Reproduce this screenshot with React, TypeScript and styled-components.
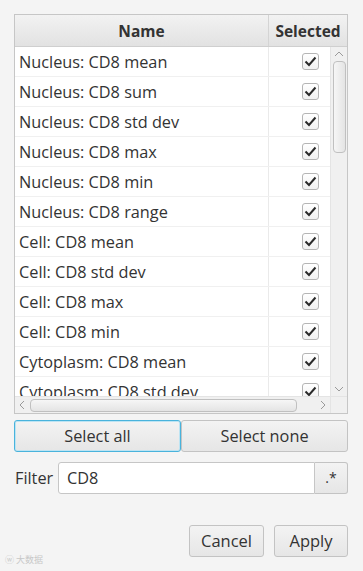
import React from "react";
import styled, { createGlobalStyle } from "styled-components";

const Global = createGlobalStyle`
  html, body { margin: 0; padding: 0; background: #f4f4f4; }
  body { font-family: "Open Sans", "Noto Sans", sans-serif; color: #333; }
`;

const Window = styled.div`
  width: 363px;
  height: 571px;
  box-sizing: border-box;
  padding: 14px 15px 0 14px;
  display: flex;
  flex-direction: column;
  position: relative;
  overflow: hidden;
`;

const Table = styled.div`
  height: 400px;
  box-sizing: border-box;
  border: 1px solid #c6c6c6;
  background: #fff;
  display: grid;
  grid-template-rows: 32px 1fr 17px;
  grid-template-columns: 1fr 17px;
`;

const Header = styled.div`
  grid-column: 1 / 3;
  display: grid;
  grid-template-columns: 254px 1fr;
  background: linear-gradient(#f2f2f2, #e2e2e2);
  border-bottom: 1px solid #cfcfcf;
  box-sizing: border-box;
`;

const HeadCell = styled.div<{ $last?: boolean }>`
  display: flex;
  align-items: center;
  justify-content: center;
  font-weight: 700;
  font-size: 15.5px;
  color: #333;
  border-right: ${(p) => (p.$last ? "none" : "1px solid #d4d4d4")};
  white-space: nowrap;
  overflow: hidden;
`;

const Body = styled.div`
  overflow: hidden;
`;

const Row = styled.div`
  display: grid;
  grid-template-columns: 254px 1fr;
  height: 30px;
  box-sizing: border-box;
  border-bottom: 1px solid #f0f0f0;
`;

const NameCell = styled.div`
  display: flex;
  align-items: center;
  padding-left: 4px;
  font-size: 16.3px;
  color: #333;
  border-right: 1px solid #eaeaea;
  white-space: nowrap;
  overflow: hidden;
`;

const CheckCell = styled.div`
  display: flex;
  align-items: center;
  justify-content: flex-end;
  padding-right: 11px;
`;

const CheckBox = styled.div`
  width: 17px;
  height: 17px;
  box-sizing: border-box;
  border: 1px solid #b5b5b5;
  border-radius: 3px;
  background: linear-gradient(#ffffff, #f1f1f1);
  display: flex;
  align-items: center;
  justify-content: center;
`;

const VScroll = styled.div`
  background: #f0f0f0;
  border-left: 1px solid #e4e4e4;
  display: flex;
  flex-direction: column;
  align-items: center;
  box-sizing: border-box;
`;

const Arrow = styled.div`
  height: 14px;
  width: 100%;
  display: flex;
  align-items: center;
  justify-content: center;
  flex: none;
`;

const VThumb = styled.div`
  width: 13px;
  height: 92px;
  box-sizing: border-box;
  border: 1px solid #c0c0c0;
  border-radius: 4px;
  background: linear-gradient(90deg, #f6f6f6, #e4e4e4);
`;

const Spacer = styled.div`
  flex: 1;
`;

const HScroll = styled.div`
  background: #f0f0f0;
  border-top: 1px solid #e4e4e4;
  display: flex;
  align-items: center;
  box-sizing: border-box;
`;

const HArrow = styled.div`
  width: 14px;
  height: 100%;
  display: flex;
  align-items: center;
  justify-content: center;
  flex: none;
`;

const HThumb = styled.div`
  width: 267px;
  height: 13px;
  margin-left: 1px;
  box-sizing: border-box;
  border: 1px solid #c0c0c0;
  border-radius: 4px;
  background: linear-gradient(#f6f6f6, #e4e4e4);
`;

const Corner = styled.div`
  background: #f0f0f0;
  border-top: 1px solid #e4e4e4;
  border-left: 1px solid #e4e4e4;
`;

const ButtonRow = styled.div`
  display: grid;
  grid-template-columns: 1fr 1fr;
  margin-top: 6px;
  height: 32px;
`;

const Btn = styled.button<{ $focus?: boolean }>`
  font-family: inherit;
  font-size: 16.3px;
  line-height: 1;
  color: #333;
  height: 32px;
  box-sizing: border-box;
  border: 1px solid ${(p) => (p.$focus ? "#49b3dc" : "#c3c3c3")};
  box-shadow: ${(p) => (p.$focus ? "inset 0 0 0 1px #bde4f3" : "none")};
  border-radius: 3px;
  background: linear-gradient(#f3f3f3, #e6e6e6);
  padding: 0 8px;
  white-space: nowrap;
  cursor: default;
`;

const FilterRow = styled.div`
  display: flex;
  align-items: center;
  margin-top: 10px;
  height: 32px;
`;

const Label = styled.span`
  font-size: 16.3px;
  color: #333;
  width: 44px;
  padding-left: 1px;
  box-sizing: border-box;
`;

const Input = styled.div`
  flex: 1;
  height: 32px;
  box-sizing: border-box;
  border: 1px solid #c6c6c6;
  border-radius: 3px 0 0 3px;
  background: #fff;
  display: flex;
  align-items: center;
  padding-left: 8px;
  font-size: 16.3px;
  color: #333;
`;

const RegexBtn = styled(Btn)`
  width: 33px;
  padding: 0;
  border-radius: 0 3px 3px 0;
  border-left: none;
  font-size: 14px;
`;

const Footer = styled.div`
  display: flex;
  justify-content: flex-end;
  gap: 10px;
  margin-top: 31px;
`;

const FooterBtn = styled(Btn)<{ $w: number }>`
  width: ${(p) => p.$w}px;
  font-size: 16.5px;
  padding: 0;
`;

const Watermark = styled.div`
  position: absolute;
  left: 5px;
  bottom: 5px;
  font-size: 9px;
  color: #c8c8c8;
  font-family: "Noto Sans CJK SC", sans-serif;
  display: flex;
  align-items: center;
  gap: 2px;
`;

const rows = [
  "Nucleus: CD8 mean",
  "Nucleus: CD8 sum",
  "Nucleus: CD8 std dev",
  "Nucleus: CD8 max",
  "Nucleus: CD8 min",
  "Nucleus: CD8 range",
  "Cell: CD8 mean",
  "Cell: CD8 std dev",
  "Cell: CD8 max",
  "Cell: CD8 min",
  "Cytoplasm: CD8 mean",
  "Cytoplasm: CD8 std dev",
  "Cytoplasm: CD8 max",
];

const Check = () => (
  <svg width="13" height="11" viewBox="0 0 13 11">
    <path d="M1.5 5.5 L5 9 L11.5 1.5" fill="none" stroke="#2a2a2a" strokeWidth="2" />
  </svg>
);

const Chevron = ({ dir }: { dir: "up" | "down" | "left" | "right" }) => {
  const d = {
    up: "M1 6 L5 2 L9 6",
    down: "M1 2 L5 6 L9 2",
    left: "M6 1 L2 5 L6 9",
    right: "M2 1 L6 5 L2 9",
  }[dir];
  const vert = dir === "up" || dir === "down";
  return (
    <svg width={vert ? 10 : 8} height={vert ? 8 : 10} viewBox={vert ? "0 0 10 8" : "0 0 8 10"}>
      <path d={d} fill="none" stroke="#9a9a9a" strokeWidth="1" />
    </svg>
  );
};

export default function App() {
  return (
    <>
      <Global />
      <Window>
        <Table>
          <Header>
            <HeadCell>Name</HeadCell>
            <HeadCell $last>Selected</HeadCell>
          </Header>
          <Body>
            {rows.map((r) => (
              <Row key={r}>
                <NameCell>{r}</NameCell>
                <CheckCell>
                  <CheckBox>
                    <Check />
                  </CheckBox>
                </CheckCell>
              </Row>
            ))}
          </Body>
          <VScroll>
            <Arrow>
              <Chevron dir="up" />
            </Arrow>
            <VThumb />
            <Spacer />
            <Arrow>
              <Chevron dir="down" />
            </Arrow>
          </VScroll>
          <HScroll>
            <HArrow>
              <Chevron dir="left" />
            </HArrow>
            <HThumb />
            <Spacer />
            <HArrow>
              <Chevron dir="right" />
            </HArrow>
          </HScroll>
          <Corner />
        </Table>
        <ButtonRow>
          <Btn $focus>Select all</Btn>
          <Btn>Select none</Btn>
        </ButtonRow>
        <FilterRow>
          <Label>Filter</Label>
          <Input>CD8</Input>
          <RegexBtn>.*</RegexBtn>
        </FilterRow>
        <Footer>
          <FooterBtn $w={75}>Cancel</FooterBtn>
          <FooterBtn $w={74}>Apply</FooterBtn>
        </Footer>
        <Watermark>
          <span>ⓦ</span>
          <span>大数据</span>
        </Watermark>
      </Window>
    </>
  );
}
